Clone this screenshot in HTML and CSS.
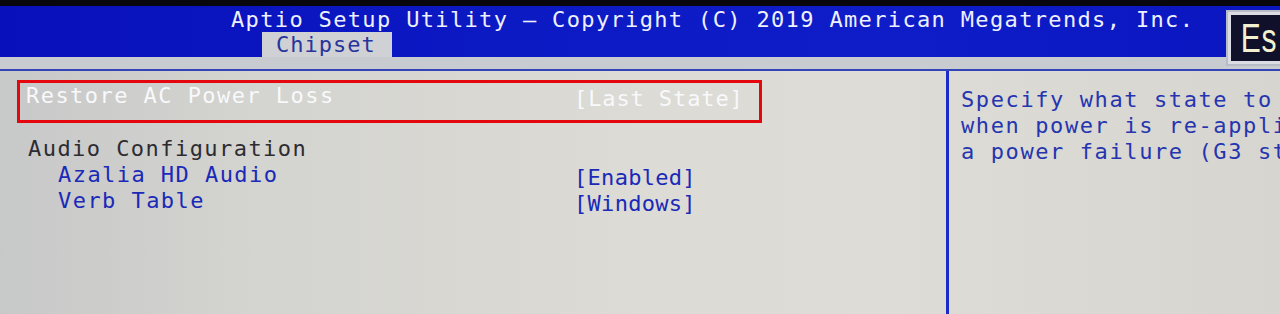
FILE: index.html
```html
<!DOCTYPE html>
<html>
<head>
<meta charset="utf-8">
<link rel="stylesheet" href="styles.css">
</head>
<body>
<div class="screen">
  <div class="topedge"></div>
  <header class="header">
    <div class="title">Aptio Setup Utility – Copyright (C) 2019 American Megatrends, Inc.</div>
    <div class="tabs"><div class="tab">Chipset</div></div>
    <div class="esc"><span>Es</span></div>
  </header>
  <div class="strip"></div>
  <main class="main">
    <section class="left">
      <div class="row selected">
        <span class="label">Restore AC Power Loss</span>
        <span class="value">[Last State]</span>
      </div>
      <div class="row heading">
        <span class="label">Audio Configuration</span>
      </div>
      <div class="row item">
        <span class="label sub">Azalia HD Audio</span>
        <span class="value">[Enabled]</span>
      </div>
      <div class="row item">
        <span class="label sub">Verb Table</span>
        <span class="value">[Windows]</span>
      </div>
    </section>
    <aside class="help">
      <div>Specify what state to go to</div>
      <div>when power is re-applied after</div>
      <div>a power failure (G3 state).</div>
    </aside>
  </main>
</div>
</body>
</html>
```

FILE: styles.css
```css
html, body {
  margin: 0;
  padding: 0;
  background: #000;
}
.screen {
  width: 1280px;
  height: 314px;
  overflow: hidden;
  position: relative;
  display: flex;
  flex-direction: column;
  font-family: "DejaVu Sans Mono", "Liberation Mono", monospace;
  font-size: 22px;
  line-height: 26px;
  letter-spacing: 1.45px;
  white-space: nowrap;
}
.topedge {
  height: 6px;
  background: #07070d;
  flex: none;
}
.header {
  flex: none;
  height: 51px;
  box-sizing: border-box;
  padding: 2px 0 0 231px;
  background: linear-gradient(90deg, #0810bb 0%, #0c1ac4 40%, #0e1dc8 70%, #0a16c0 100%);
  display: flex;
  flex-direction: column;
}
.title {
  color: #eef0ff;
  line-height: 24px;
  letter-spacing: 1.35px;
}
.tabs {
  display: flex;
  padding-left: 31px;
}
.tab {
  width: 130px;
  height: 25px;
  box-sizing: border-box;
  padding-left: 14px;
  line-height: 25px;
  background: #cfd1d5;
  color: #28349c;
  letter-spacing: 1px;
}
.esc {
  position: absolute;
  left: 1228px;
  top: 12px;
  width: 60px;
  height: 52px;
  box-sizing: border-box;
  border: 3px solid #dcdde4;
  border-right: none;
  background: #10102a;
  outline: 2px solid #b8bcc8;
  color: #f2f0cf;
  overflow: hidden;
}
.esc span {
  display: block;
  padding: 2px 0 0 13px;
  font-family: "Liberation Sans", sans-serif;
  font-size: 40px;
  line-height: 42px;
  letter-spacing: 1px;
  transform: scaleX(0.75);
  transform-origin: left top;
}
.strip {
  flex: none;
  height: 12px;
  background: #c8cbd0;
  border-bottom: 2px solid #3444b8;
}
.main {
  flex: 1;
  display: flex;
  background: linear-gradient(90deg, #c7c8c8 0%, #d4d4d0 20%, #dcdbd5 50%, #dddcd6 70%, #d6d5cf 100%);
}
.left {
  width: 946px;
  flex: none;
  box-sizing: border-box;
  padding: 9px 0 0 17px;
}
.row {
  display: grid;
  grid-template-columns: 546px auto;
  padding-left: 11px;
}
.value {
  letter-spacing: 0.3px;
}
.row.selected {
  width: 745px;
  height: 43px;
  box-sizing: border-box;
  border: 3px solid #e4080e;
  padding-left: 6px;
  grid-template-columns: 548px auto;
  color: #f8f9fb;
  margin-bottom: 13px;
}
.row.selected .value {
  padding-top: 3px;
  letter-spacing: 0.9px;
}
.row.heading {
  color: #2c2c32;
}
.row.item {
  color: #1a29b8;
}
.row.item .value {
  padding-top: 3px;
  margin-bottom: -3px;
}
.label.sub {
  padding-left: 30px;
}
.help {
  flex: 1;
  border-left: 3px solid #1a2bc8;
  padding: 16px 0 0 12px;
  color: #2535b0;
  letter-spacing: 1.6px;
  overflow: hidden;
}
```
